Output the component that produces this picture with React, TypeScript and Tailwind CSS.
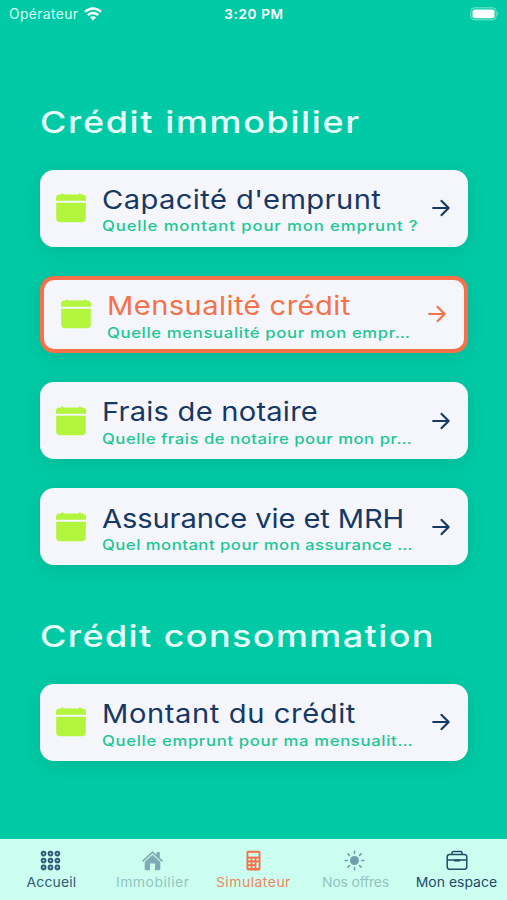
import type { ReactNode } from "react";

function CalendarIcon() {
  return (
    <svg viewBox="0 0 30 30" className="h-[30px] w-[30px] shrink-0 fill-[#b3f53c]">
      <path d="M0 7.8V5.2Q0 1.8 3.6 1.6H4.8L6.2 0L7.6 1.6H22.4L23.8 0L25.2 1.6H26.4Q30 1.8 30 5.2V7.8Z" />
      <path d="M0.2 9.8H29.8V25.4Q29.8 29.2 25.8 29.2H4.2Q0.2 29.2 0.2 25.4Z" />
    </svg>
  );
}

function ArrowIcon() {
  return (
    <svg viewBox="0 0 18 18" className="h-[18px] w-[18px] shrink-0 fill-none stroke-current stroke-[2.2]" strokeLinecap="round" strokeLinejoin="round">
      <path d="M1.2 9H16.6M9.6 1.9L16.6 9L9.6 16.1" />
    </svg>
  );
}

type CardProps = {
  title: string;
  titleTracking: string;
  text: string;
  textTracking: string;
  active?: boolean;
};

function Card({ title, titleTracking, text, textTracking, active }: CardProps) {
  return (
    <button
      className={`flex h-[77px] w-[428px] shrink-0 items-center rounded-[14px] bg-[#f5f6fb] text-left shadow-[0_4px_18px_rgba(0,90,70,0.17)] ${
        active ? "border-[4.5px] border-[#f5714a] pr-[18px] pl-[17px] text-[#f5714a]" : "pr-[18px] pl-[16.4px] text-[#163864]"
      }`}
    >
      <CalendarIcon />
      <span className="ml-[16px] flex min-w-0 flex-1 flex-col pt-[4px]">
        <span className={`origin-left scale-x-[1.12] text-[26px] leading-[32px] whitespace-nowrap ${titleTracking}`}>{title}</span>
        <span className={`mt-[0.5px] origin-left scale-x-[1.15] text-[14.5px] leading-[20px] font-medium whitespace-nowrap text-[#1cc796] ${textTracking}`}>{text}</span>
      </span>
      <ArrowIcon />
    </button>
  );
}

function Heading({ children, tracking }: { children: ReactNode; tracking: string }) {
  return (
    <h1 className={`origin-left scale-x-[1.2] text-[30px] leading-[40px] font-medium whitespace-nowrap text-[#e6fff8] ${tracking}`}>{children}</h1>
  );
}

function Tab({ icon, label, className }: { icon: ReactNode; label: string; className: string }) {
  return (
    <button className={`flex flex-1 basis-0 flex-col items-center pt-[11px] ${className}`}>
      {icon}
      <span className="mt-[2.5px] ml-[0.5px] scale-x-[1.06] text-[13.2px] leading-[18px] whitespace-nowrap">{label}</span>
    </button>
  );
}

const dots = [3.5, 10.25, 17];

export default function App() {
  return (
    <div className="flex h-[900px] w-[507px] flex-col overflow-hidden bg-[#00caa5] font-['Inter',sans-serif]">
      <header className="grid h-[28px] shrink-0 grid-cols-3 items-center pr-[7px] pl-[9px] text-white">
        <div className="flex items-center gap-[6px] text-[#d9fff5]">
          <span className="text-[13.8px] tracking-[0.4px]">Opérateur</span>
          <svg viewBox="0 0 20 15" className="h-[14px] w-[18px] fill-none stroke-white stroke-[2.7]">
            <path d="M1 5.2Q10 -2.4 19 5.2M4.2 8.8Q10 4 15.8 8.8" />
            <path d="M10 14.6L6.6 11.2Q10 8.6 13.4 11.2Z" className="fill-white stroke-none" />
          </svg>
        </div>
        <span className="pr-px text-center text-[13.6px] font-semibold tracking-[0.6px]">3:20 PM</span>
        <svg viewBox="0 0 30 14" className="h-[14px] w-[30px] justify-self-end">
          <rect x="0.8" y="0.8" width="25.4" height="12" rx="3.6" className="fill-none stroke-[#7ce6d0]" />
          <rect x="2.5" y="2.4" width="22" height="8.8" rx="2" className="fill-white" />
          <path d="M27.5 4.8Q29.5 6.8 27.5 8.8Z" className="fill-[#7ce6d0]" />
        </svg>
      </header>

      <main className="flex flex-1 flex-col px-[40px] pt-[74px]">
        <Heading tracking="tracking-[1.35px]">Crédit immobilier</Heading>
        <div className="mt-[27.5px] flex flex-col gap-[29.3px]">
          <Card title="Capacité d'emprunt" titleTracking="tracking-[0.38px]" text="Quelle montant pour mon emprunt ?" textTracking="tracking-[0.79px]" />
          <Card active title="Mensualité crédit" titleTracking="tracking-[0.38px]" text="Quelle mensualité pour mon empr…" textTracking="tracking-[0.57px]" />
          <Card title="Frais de notaire" titleTracking="tracking-[0.2px]" text="Quelle frais de notaire pour mon pr…" textTracking="tracking-[0.46px]" />
          <Card title="Assurance vie et MRH" titleTracking="tracking-[-0.1px]" text="Quel montant pour mon assurance …" textTracking="tracking-[0.43px]" />
        </div>
        <div className="mt-[51px]">
          <Heading tracking="tracking-[1.16px]">Crédit consommation</Heading>
        </div>
        <div className="mt-[27.5px] flex flex-col">
          <Card title="Montant du crédit" titleTracking="tracking-[0.54px]" text="Quelle emprunt pour ma mensualit…" textTracking="tracking-[0.58px]" />
        </div>
      </main>

      <nav className="flex h-[61.5px] shrink-0 bg-[#cbfff0]">
        <Tab
          label="Accueil"
          className="tracking-[0.1px] text-[#2f5a75]"
          icon={
            <svg viewBox="0 0 20.5 20.5" className="h-[21px] w-[21px] fill-[#a5cfd0] stroke-[#2b5577] stroke-[1.7]">
              {dots.map((y) => dots.map((x) => <circle key={`${x}-${y}`} cx={x} cy={y} r="1.9" />))}
            </svg>
          }
        />
        <Tab
          label="Immobilier"
          className="tracking-[0.45px] text-[#93c4bf]"
          icon={
            <svg viewBox="0 0 21 21" className="h-[21px] w-[21px] fill-[#7fabb4]">
              <path d="M10.5 1L14.6 4.8V2H17.8V7.8L21 10.8L19.8 12L10.5 3.3L1.2 12L0 10.8Z" />
              <path d="M10.5 4.8L18.3 12.1V19Q18.3 20.2 17 20.2H13V13.5H8V20.2H4Q2.7 20.2 2.7 19V12.1Z" />
            </svg>
          }
        />
        <Tab
          label="Simulateur"
          className="tracking-[0.45px] text-[#ee8560]"
          icon={
            <svg viewBox="0 0 21 21" className="h-[21px] w-[21px]">
              <rect x="3.5" y="0.8" width="14" height="19.6" rx="1.6" className="fill-[#f5714a]" />
              <g className="fill-[#cbfff0]">
                <rect x="5.4" y="2.8" width="10.2" height="3.8" />
                <rect x="5.4" y="8.6" width="2.2" height="1.8" />
                <rect x="9.4" y="8.6" width="2.2" height="1.8" />
                <rect x="13.4" y="8.6" width="2.2" height="1.8" />
                <rect x="5.4" y="12.4" width="2.2" height="1.8" />
                <rect x="9.4" y="12.4" width="2.2" height="1.8" />
                <rect x="5.4" y="16.2" width="2.2" height="1.8" />
                <rect x="9.4" y="16.2" width="2.2" height="1.8" />
                <rect x="13.4" y="12.4" width="2.2" height="5.6" />
              </g>
            </svg>
          }
        />
        <Tab
          label="Nos offres"
          className="tracking-[-0.2px] text-[#93c4bf]"
          icon={
            <svg viewBox="0 0 21 21" className="h-[21px] w-[21px] stroke-[#6f9fab] stroke-[1.6]" strokeLinecap="round">
              <circle cx="10.5" cy="10.5" r="4.5" className="fill-[#6f9fab] stroke-none" />
              <path d="M10.5 1.2V3.4M10.5 17.6V19.8M1.2 10.5H3.4M17.6 10.5H19.8M3.9 3.9L5.4 5.4M15.6 15.6L17.1 17.1M3.9 17.1L5.4 15.6M15.6 5.4L17.1 3.9" />
            </svg>
          }
        />
        <Tab
          label="Mon espace"
          className="tracking-[0px] text-[#234a68]"
          icon={
            <svg viewBox="0 0 22 21" className="ml-px h-[21px] w-[22px] fill-none stroke-[#234a68] stroke-[1.5]">
              <rect x="1.2" y="4.6" width="19.6" height="14.6" rx="2.4" />
              <path d="M6 4.6V3Q6 1.6 7.4 1.6H14.6Q16 1.6 16 3V4.6M1.2 10H20.8" />
              <rect x="7.8" y="9.4" width="6.4" height="2.2" rx="0.8" className="fill-[#234a68] stroke-none" />
            </svg>
          }
        />
      </nav>
    </div>
  );
}
